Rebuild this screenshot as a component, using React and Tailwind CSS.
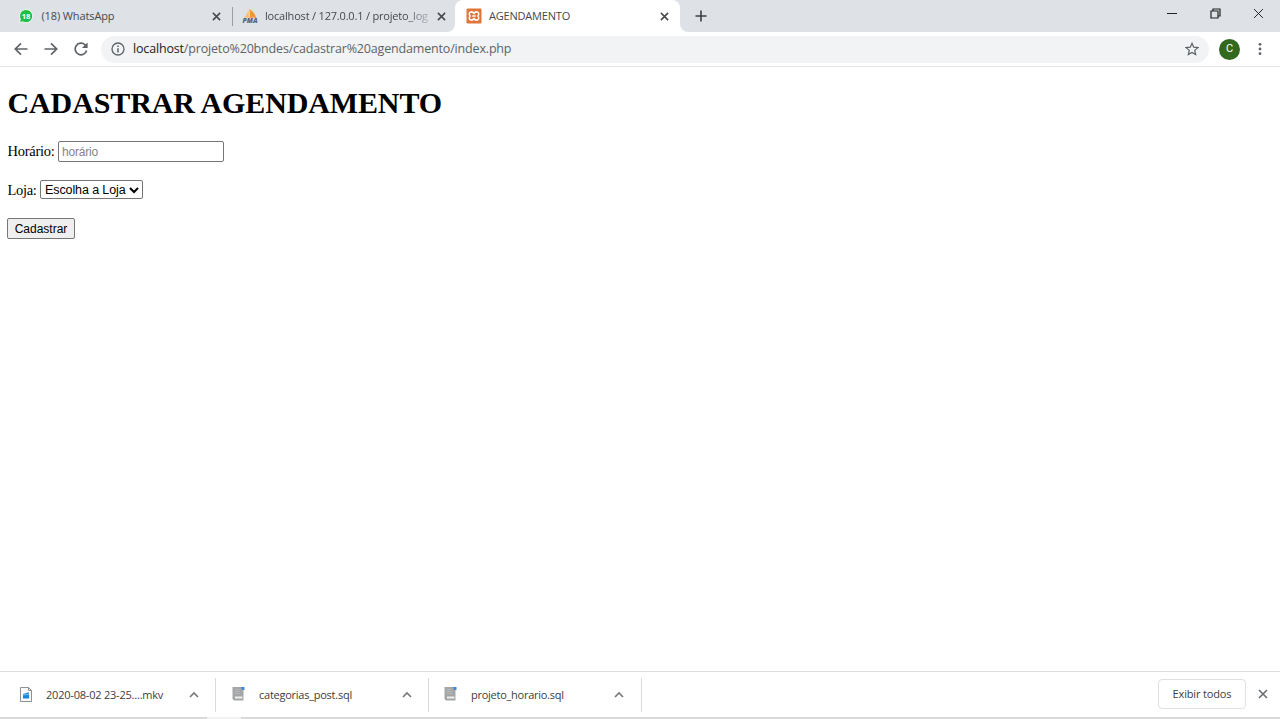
import React from 'react';

const ui = "font-['Open_Sans','Noto_Sans',sans-serif] whitespace-nowrap";

function Cross({ className, width = 1.7 }) {
  return (
    <svg viewBox="0 0 10 10" className={className} fill="none" stroke="currentColor" strokeWidth={width}>
      <path d="M1 1 9 9M9 1 1 9" />
    </svg>
  );
}

function WhatsAppIcon() {
  return (
    <svg viewBox="0 0 16 16" className="ml-[18px] size-4 shrink-0">
      <path d="M8 1.5a6.6 6.6 0 1 1-3 12.4L1.6 14.6 2.3 11.2A6.6 6.6 0 0 1 8 1.5Z" fill="#20bd48" stroke="#f4faf5" strokeWidth="1" />
      <text x="8" y="10.9" textAnchor="middle" fontSize="7.5" fontWeight="700" fill="#fff" fontFamily="Open Sans, sans-serif">18</text>
    </svg>
  );
}

function PmaIcon() {
  return (
    <svg viewBox="0 0 16 16" className="ml-[9px] size-4 shrink-0">
      <path d="M6.3 2.2C5.5 5 4 8 1.6 10.4c1.7-.7 3.3-.8 5-.4C7.200 7 7 4.600 6.300 2.200Z" fill="#f8bd72" />
      <path d="M7.200 1c3.600 2 6.200 5.200 7.200 9.200-2-.9-4.700-.9-6.800-.2.5-3 .5-6-.4-9Z" fill="#f39830" />
      <text x="8" y="15" textAnchor="middle" fontSize="6" fontWeight="800" fontStyle="italic" fill="#5c6082" textLength="15" lengthAdjust="spacingAndGlyphs" fontFamily="Open Sans, sans-serif">PMA</text>
    </svg>
  );
}

function XamppIcon() {
  return (
    <svg viewBox="0 0 16 16" className="ml-[11px] size-4 shrink-0">
      <rect x="0.500" y="0.500" width="15" height="15" rx="1.200" fill="#e0763a" />
      <path d="M4.300 4.200c2-.9 3 .2 3.700 1.300.7-1.100 1.700-2.200 3.700-1.300 1.500.8 1.300 2.600.1 3.800 1.200 1.200 1.400 3-.1 3.800-2 .9-3-.2-3.700-1.300-.7 1.100-1.700 2.200-3.700 1.300-1.500-.8-1.300-2.600-.1-3.800-1.200-1.200-1.400-3 .1-3.800ZM6.300 8h3.400" fill="none" stroke="#fff" strokeWidth="1.500" strokeLinejoin="round" />
    </svg>
  );
}

function TabStrip() {
  return (
    <div className={`flex h-8 shrink-0 bg-white text-[11px] text-[#45494d] ${ui}`}>
      <div className="flex w-[455px] shrink-0 rounded-br-lg bg-[#dee1e6]">
        <div className="flex w-[232px] items-center">
          <WhatsAppIcon />
          <span className="ml-[7.500px] w-[160px] shrink-0 tracking-[-0.12px]">(18) WhatsApp</span>
          <Cross className="ml-[10.500px] size-[9px] shrink-0" />
        </div>
        <div className="mt-[7px] h-[19px] w-px bg-[#9a9da1]" />
        <div className="flex w-[222px] items-center">
          <PmaIcon />
          <span className="ml-[7px] w-[166px] shrink-0 tracking-[-0.190px] [mask-image:linear-gradient(to_right,black_140px,rgba(0,0,0,0.25)_164px)]">localhost / 127.0.0.1 / projeto_log</span>
          <Cross className="ml-[6px] size-[9px] shrink-0" />
        </div>
      </div>
      <div className="flex w-[225px] shrink-0 bg-[#dee1e6]">
        <div className="flex w-full items-center rounded-t-lg bg-white">
          <XamppIcon />
          <span className="ml-[7px] w-[160px] shrink-0 tracking-[-0.200px]">AGENDAMENTO</span>
          <Cross className="ml-[11px] size-[9px] shrink-0" />
        </div>
      </div>
      <div className="flex flex-1 rounded-bl-lg bg-[#dee1e6]">
        <svg viewBox="0 0 12 12" className="mt-[10px] ml-[15px] size-3 stroke-[#3c4043]" fill="none" strokeWidth="1.600">
          <path d="M6 .5v11M.5 6h11" />
        </svg>
        <div className="ml-auto flex h-[27px] items-center text-[#222]">
          <div className="h-px w-[10px] bg-current" />
          <svg viewBox="0 0 11 11" className="mr-[32px] ml-[33px] size-[11px]" fill="none" stroke="currentColor" strokeWidth="1.200">
            <path d="M1 3h7v7H1ZM3 3V1h7v7H8" />
          </svg>
          <Cross className="mr-[16px] size-[11px]" width={0.9} />
        </div>
      </div>
    </div>
  );
}

function Toolbar() {
  return (
    <div className="flex h-[35px] shrink-0 items-center border-b border-[#e4e5e7] bg-white text-[#5f6368]">
      <svg viewBox="0 0 14 14" className="ml-[13.500px] size-[14px]" fill="none" stroke="currentColor" strokeWidth="1.700">
        <path d="M13.500 7H1.500M7 1.300 1.300 7 7 12.700" />
      </svg>
      <svg viewBox="0 0 14 14" className="ml-[16px] size-[14px]" fill="none" stroke="currentColor" strokeWidth="1.700">
        <path d="M.5 7h12M7 1.300 12.700 7 7 12.700" />
      </svg>
      <svg viewBox="0 0 14 14" className="ml-[16px] size-[14px]" fill="none" stroke="currentColor" strokeWidth="1.700">
        <path d="M12.600 8.500A5.800 5.800 0 1 1 11.100 2.900L12.500 4.300" />
        <path d="M13.600 .4v5.700H7.900Z" fill="currentColor" stroke="none" />
      </svg>
      <div className="ml-[13.500px] flex h-[27px] w-[1108px] items-center rounded-full bg-[#f1f3f4]">
        <svg viewBox="0 0 14 14" className="ml-[10px] size-[14px] shrink-0" fill="none" stroke="currentColor" strokeWidth="1.300">
          <circle cx="7" cy="7" r="6" />
          <path d="M7 6.200v4.300M7 3.400v1.500" strokeWidth="1.500" />
        </svg>
        <div className={`ml-[8px] pt-px text-[12.500px] tracking-[-0.170px] ${ui}`}>
          <span className="text-[#202124]">localhost</span>/projeto%20bndes/cadastrar%20agendamento/index.php
        </div>
        <svg viewBox="0 0 14 14" className="mr-[10px] ml-auto size-[14px]" fill="none" stroke="currentColor" strokeWidth="1.200">
          <path d="m7 1.300 1.700 3.900 4.200.4-3.200 2.800.95 4.200L7 10.400l-3.650 2.200.95-4.200L1.100 5.600l4.200-.4Z" />
        </svg>
      </div>
      <div className="ml-[10px] flex size-[21px] items-center justify-center rounded-full bg-[#33691e] font-[Roboto,sans-serif] text-[11px] text-white">C</div>
      <svg viewBox="0 0 4 14" className="ml-[18px] h-[14px] w-1" fill="currentColor">
        <circle cx="2" cy="2.300" r="1.400" />
        <circle cx="2" cy="7" r="1.400" />
        <circle cx="2" cy="11.700" r="1.400" />
      </svg>
    </div>
  );
}

function Page() {
  return (
    <main className="flex-1 bg-white px-[7.500px] pt-[19px] font-['Liberation_Serif',serif] text-[15px] text-black">
      <h1 className="h-[34px] text-[30px] leading-[34px] font-bold tracking-[-0.120px] whitespace-nowrap">CADASTRAR AGENDAMENTO</h1>
      <div className="mt-[20px] flex h-[23px] items-center">
        <label className="w-[50.500px] pt-px text-[14.500px] tracking-[-0.250px]" htmlFor="horario">Horário:</label>
        <input id="horario" placeholder="horário" className="h-[21px] w-[166px] rounded-[2px] border border-[#767676] px-[3px] pt-px font-['Liberation_Sans',sans-serif] text-[12px] tracking-[-0.200px] placeholder:text-[#858585]" />
      </div>
      <div className="mt-[16px] flex h-[22px] items-center">
        <label className="w-[32.500px] pt-px text-[14.500px] tracking-[-0.300px]">Loja:</label>
        <button className="-mt-px flex h-[19px] w-[103px] items-center rounded-[2px] border border-[#767676] pt-px pl-[4px] font-['Liberation_Sans',sans-serif] text-[12.500px] tracking-[-0.100px] whitespace-nowrap">
          Escolha a Loja
          <svg viewBox="0 0 10 7" className="mr-[3px] ml-auto h-[7px] w-[10px]" fill="none" stroke="currentColor" strokeWidth="2">
            <path d="m1 1 4 4 4-4" />
          </svg>
        </button>
      </div>
      <button className="mt-[17px] -ml-[0.500px] flex h-[21px] w-[68px] items-center justify-center rounded-[2px] border border-[#767676] bg-[#efefef] pt-px font-['Liberation_Sans',sans-serif] text-[12px]">Cadastrar</button>
    </main>
  );
}

function VideoFile() {
  return (
    <svg viewBox="0 0 12 15" className="-mt-px h-[15px] w-3 shrink-0">
      <path d="M.5.5h8l3 3v11H.5Z" fill="#fafafa" stroke="#8d9194" />
      <path d="M8.500.5v3h3" fill="none" stroke="#8d9194" />
      <path d="M3 6.900 8.800 5.300v1.900h.3v4.300H3Z" fill="#1687dc" />
      <path d="M3 8 9.100 7.300" stroke="#d9edfb" strokeWidth=".5" />
    </svg>
  );
}

function SqlFile() {
  return (
    <svg viewBox="0 0 13 15" className="-mt-[2px] h-[15px] w-[13px] shrink-0">
      <path d="M.5 1h9l2 2v11.500H2L.5 13Z" fill="#a3a5a6" />
      <path d="M2.500 3.500h5M2.500 5.500h6M2.500 7.500h6" stroke="#b9bcbe" strokeWidth=".8" />
      <path d="M3 10.500h7.500v2H3Z" fill="#eceeef" />
      <path d="M9 1h3.500v3H10Z" fill="#3f88dc" />
    </svg>
  );
}

const downloads = [
  { name: '2020-08-02 23-25....mkv', box: 'w-[216px] pl-[20px]', label: 'ml-[14px] w-[142.500px] tracking-[-0.210px]', icon: <VideoFile /> },
  { name: 'categorias_post.sql', box: 'w-[213px] pl-[16px]', label: 'ml-[14px] w-[142.500px] tracking-[-0.250px]', icon: <SqlFile /> },
  { name: 'projeto_horario.sql', box: 'w-[213px] pl-[15px]', label: 'ml-[14px] w-[142.500px] tracking-[-0.260px]', icon: <SqlFile /> },
];

function DownloadShelf() {
  return (
    <footer className={`flex h-[48px] shrink-0 flex-col border-t border-[#dcdddf] bg-white text-[11px] text-[#3c4043] ${ui}`}>
      <div className="flex h-[45px] items-center">
        {downloads.map((d) => (
          <div key={d.name} className={`flex h-[34px] items-center border-r border-[#d9dadc] ${d.box}`}>
            {d.icon}
            <span className={`shrink-0 pt-[2px] ${d.label}`}>{d.name}</span>
            <svg viewBox="0 0 10 7" className="h-[7px] w-[10px] shrink-0" fill="none" stroke="#77797c" strokeWidth="1.700">
              <path d="m1 6 4-4 4 4" />
            </svg>
          </div>
        ))}
        <button className="-mt-px ml-auto flex h-[30px] w-[88px] items-center justify-center rounded-[4px] border border-[#dfe0e3] tracking-[-0.150px]">Exibir todos</button>
        <Cross className="-mt-px mr-[12px] ml-[12px] size-[10px] text-[#6a6d70]" width={1.6} />
      </div>
      <div className="flex h-[2px] bg-[#d9d9d9]">
        <div className="ml-[207px] h-full w-[34px] bg-[#f1f1f1]" />
      </div>
    </footer>
  );
}

export default function App() {
  return (
    <div className="flex h-[719px] w-[1280px] flex-col overflow-hidden bg-white">
      <TabStrip />
      <Toolbar />
      <Page />
      <DownloadShelf />
    </div>
  );
}
